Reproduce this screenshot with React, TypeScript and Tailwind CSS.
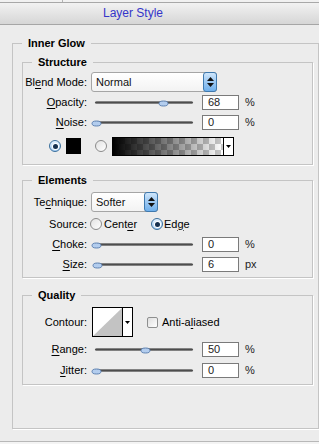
import type { ReactNode } from 'react';

function U({ children }: { children: ReactNode }) {
  return <span className="underline underline-offset-[2px]">{children}</span>;
}

function Label({ children }: { children: ReactNode }) {
  return <div className="w-[64px] shrink-0 text-right">{children}</div>;
}

function Legend({ children }: { children: ReactNode }) {
  return <legend className="ml-[9px] px-[6px] font-bold leading-[13px]">{children}</legend>;
}

function SpinSelect({ value, width }: { value: string; width: string }) {
  return (
    <div className={`${width} h-full flex rounded-[3px] border border-[#a5a5a5] bg-gradient-to-b from-white to-[#f3f3f3]`}>
      <div className="flex-1 flex items-center pl-[4px] text-[#111]">{value}</div>
      <div className="w-[14px] -my-px -mr-px rounded-[3px] border border-[#3f79ae] bg-gradient-to-b from-[#cfe6fb] via-[#9cc8f2] to-[#6fb0ec] flex flex-col items-center justify-center gap-[2px]">
        <svg width="7" height="4" viewBox="0 0 7 4"><path d="M3.5 0 L7 4 L0 4 Z" fill="#111" /></svg>
        <svg width="7" height="4" viewBox="0 0 7 4"><path d="M0 0 L7 0 L3.5 4 Z" fill="#111" /></svg>
      </div>
    </div>
  );
}

function Slider({ value }: { value: number }) {
  return (
    <div className="relative w-[98px] h-[8px] flex items-center">
      <div className="w-full h-[3px] rounded-full bg-gradient-to-b from-[#a0a0a0] via-[#4d4d4d] to-[#9c9c9c]" />
      <svg
        className="absolute top-[1px]"
        style={{ left: value * 0.98 - 4 }}
        width="11"
        height="7"
        viewBox="0 0 11 7"
      >
        <path d="M1 3.5 Q1 1 5.5 1 Q10 1 10 3.5 Q10 6 5.5 6 Q1 6 1 3.5 Z" fill="#b3cdee" stroke="#5d81b2" strokeWidth="1" />
      </svg>
    </div>
  );
}

function NumBox({ value }: { value: string }) {
  return (
    <div className="w-[37px] h-full border border-[#7a7a7a] bg-white flex items-center pl-[5px] text-[#222]">
      {value}
    </div>
  );
}

function SliderRow({ label, value, pos, unit, mt }: { label: ReactNode; value: string; pos: number; unit: string; mt: string }) {
  return (
    <div className={`${mt} h-[15px] flex items-center`}>
      <Label>{label}</Label>
      <div className="ml-[8px]">
        <Slider value={pos} />
      </div>
      <div className="ml-[9px] h-full">
        <NumBox value={value} />
      </div>
      <div className="ml-[6px] text-[#222]">{unit}</div>
    </div>
  );
}

function Radio({ checked }: { checked?: boolean }) {
  if (checked) {
    return (
      <div className="w-[12px] h-[12px] shrink-0 rounded-full border border-[#3a6f9c] bg-gradient-to-b from-[#e4f2ff] to-[#a9d0f5] flex items-center justify-center">
        <div className="w-[5px] h-[5px] rounded-full bg-[#15304f] ring-1 ring-white" />
      </div>
    );
  }
  return <div className="w-[12px] h-[12px] shrink-0 rounded-full border border-[#8b8b8b] bg-gradient-to-br from-[#e2e2e2] to-white" />;
}

export default function App() {
  return (
    <div className="w-[319px] h-[444px] bg-[#ececec] flex flex-col overflow-hidden text-[11px] leading-[13px] text-black font-['Liberation_Sans',Arial,sans-serif]">
      {/* window strip */}
      <div className="h-[3px] bg-[#f1f1f1] border-b border-[#a8a8a8] flex">
        <div className="w-[63px] border-r border-[#b3b3b3]" />
      </div>

      {/* title */}
      <div className="h-[22px] border-b border-[#a6a6a6] bg-gradient-to-b from-[#f2f2f2] to-[#d6d6d6] flex items-center pl-[103px] text-[12px] text-[#3535c9]">
        Layer Style
      </div>

      <fieldset className="mt-[12px] ml-[12px] w-[307px] border border-[#c4c4c4] shadow-[1px_1px_0_#fff] pb-[43px]">
        <Legend>Inner Glow</Legend>

        {/* Structure */}
        <fieldset className="mt-[6px] ml-[9px] mr-[5px] border border-[#c4c4c4] shadow-[1px_1px_0_#fff] pb-[9px]">
          <Legend>Structure</Legend>
          <div className="mt-[3px] h-[20px] flex items-center">
            <Label>Bl<U>e</U>nd Mode:</Label>
            <div className="ml-[4px] h-full">
              <SpinSelect value="Normal" width="w-[126px]" />
            </div>
          </div>
          <SliderRow mt="mt-[3px]" label={<><U>O</U>pacity:</>} value="68" pos={68} unit="%" />
          <SliderRow mt="mt-[5px]" label={<><U>N</U>oise:</>} value="0" pos={0} unit="%" />
          <div className="mt-[7px] h-[18px] flex items-center">
            <div className="ml-[26px]">
              <Radio checked />
            </div>
            <div className="ml-[5px] w-[15px] h-[16px] shrink-0 bg-black" />
            <div className="ml-[14px]">
              <Radio />
            </div>
            <div className="ml-[5px] w-[122px] h-[19px] shrink-0 border border-black flex">
              <div className="flex-1 bg-[repeating-conic-gradient(#c9c9c9_0_25%,#fff_0_50%)] bg-[length:12px_12px]">
                <div className="w-full h-full bg-gradient-to-r from-black to-transparent" />
              </div>
              <div className="w-[10px] border-l border-black bg-white flex items-center justify-center">
                <svg width="5" height="3" viewBox="0 0 5 3"><path d="M0 0 L5 0 L2.5 3 Z" fill="#000" /></svg>
              </div>
            </div>
          </div>
        </fieldset>

        {/* Elements */}
        <fieldset className="mt-[9px] ml-[9px] mr-[5px] border border-[#c4c4c4] shadow-[1px_1px_0_#fff] pb-[5px]">
          <Legend>Elements</Legend>
          <div className="mt-[5px] h-[20px] flex items-center">
            <Label>Te<U>c</U>hnique:</Label>
            <div className="ml-[4px] h-full">
              <SpinSelect value="Softer" width="w-[67px]" />
            </div>
          </div>
          <div className="mt-[5px] h-[14px] flex items-center">
            <Label>Source:</Label>
            <div className="ml-[3px]">
              <Radio />
            </div>
            <div className="ml-[2px] w-[47px]">Cent<U>e</U>r</div>
            <Radio checked />
            <div className="ml-[1px]">Ed<U>g</U>e</div>
          </div>
          <SliderRow mt="mt-[6px]" label={<><U>C</U>hoke:</>} value="0" pos={0} unit="%" />
          <SliderRow mt="mt-[5px]" label={<><U>S</U>ize:</>} value="6" pos={1} unit="px" />
        </fieldset>

        {/* Quality */}
        <fieldset className="mt-[11px] ml-[9px] mr-[5px] border border-[#c4c4c4] shadow-[1px_1px_0_#fff] pb-[6px]">
          <Legend>Quality</Legend>
          <div className="mt-[5px] h-[30px] flex items-center">
            <Label>Contour:</Label>
            <div className="ml-[5px] w-[41px] h-full border border-black bg-white flex">
              <svg className="flex-1 h-full" viewBox="0 0 30 28" preserveAspectRatio="none">
                <path d="M0 28 L30 0 L30 28 Z" fill="#c3c3c3" />
              </svg>
              <div className="w-[10px] border-l border-black flex items-center justify-center">
                <svg width="5" height="3" viewBox="0 0 5 3"><path d="M0 0 L5 0 L2.5 3 Z" fill="#000" /></svg>
              </div>
            </div>
            <div className="ml-[14px] w-[11px] h-[11px] rounded-[2px] border border-[#8e8f8f] bg-gradient-to-br from-[#dedede] to-white" />
            <div className="ml-[4px]">Anti-a<U>l</U>iased</div>
          </div>
          <SliderRow mt="mt-[5px]" label={<><U>R</U>ange:</>} value="50" pos={50} unit="%" />
          <SliderRow mt="mt-[6px]" label={<><U>J</U>itter:</>} value="0" pos={0} unit="%" />
        </fieldset>
      </fieldset>

      <div className="mt-auto h-[3px] border-t border-[#b8b8b8] bg-[#f4f4f4]" />
    </div>
  );
}
